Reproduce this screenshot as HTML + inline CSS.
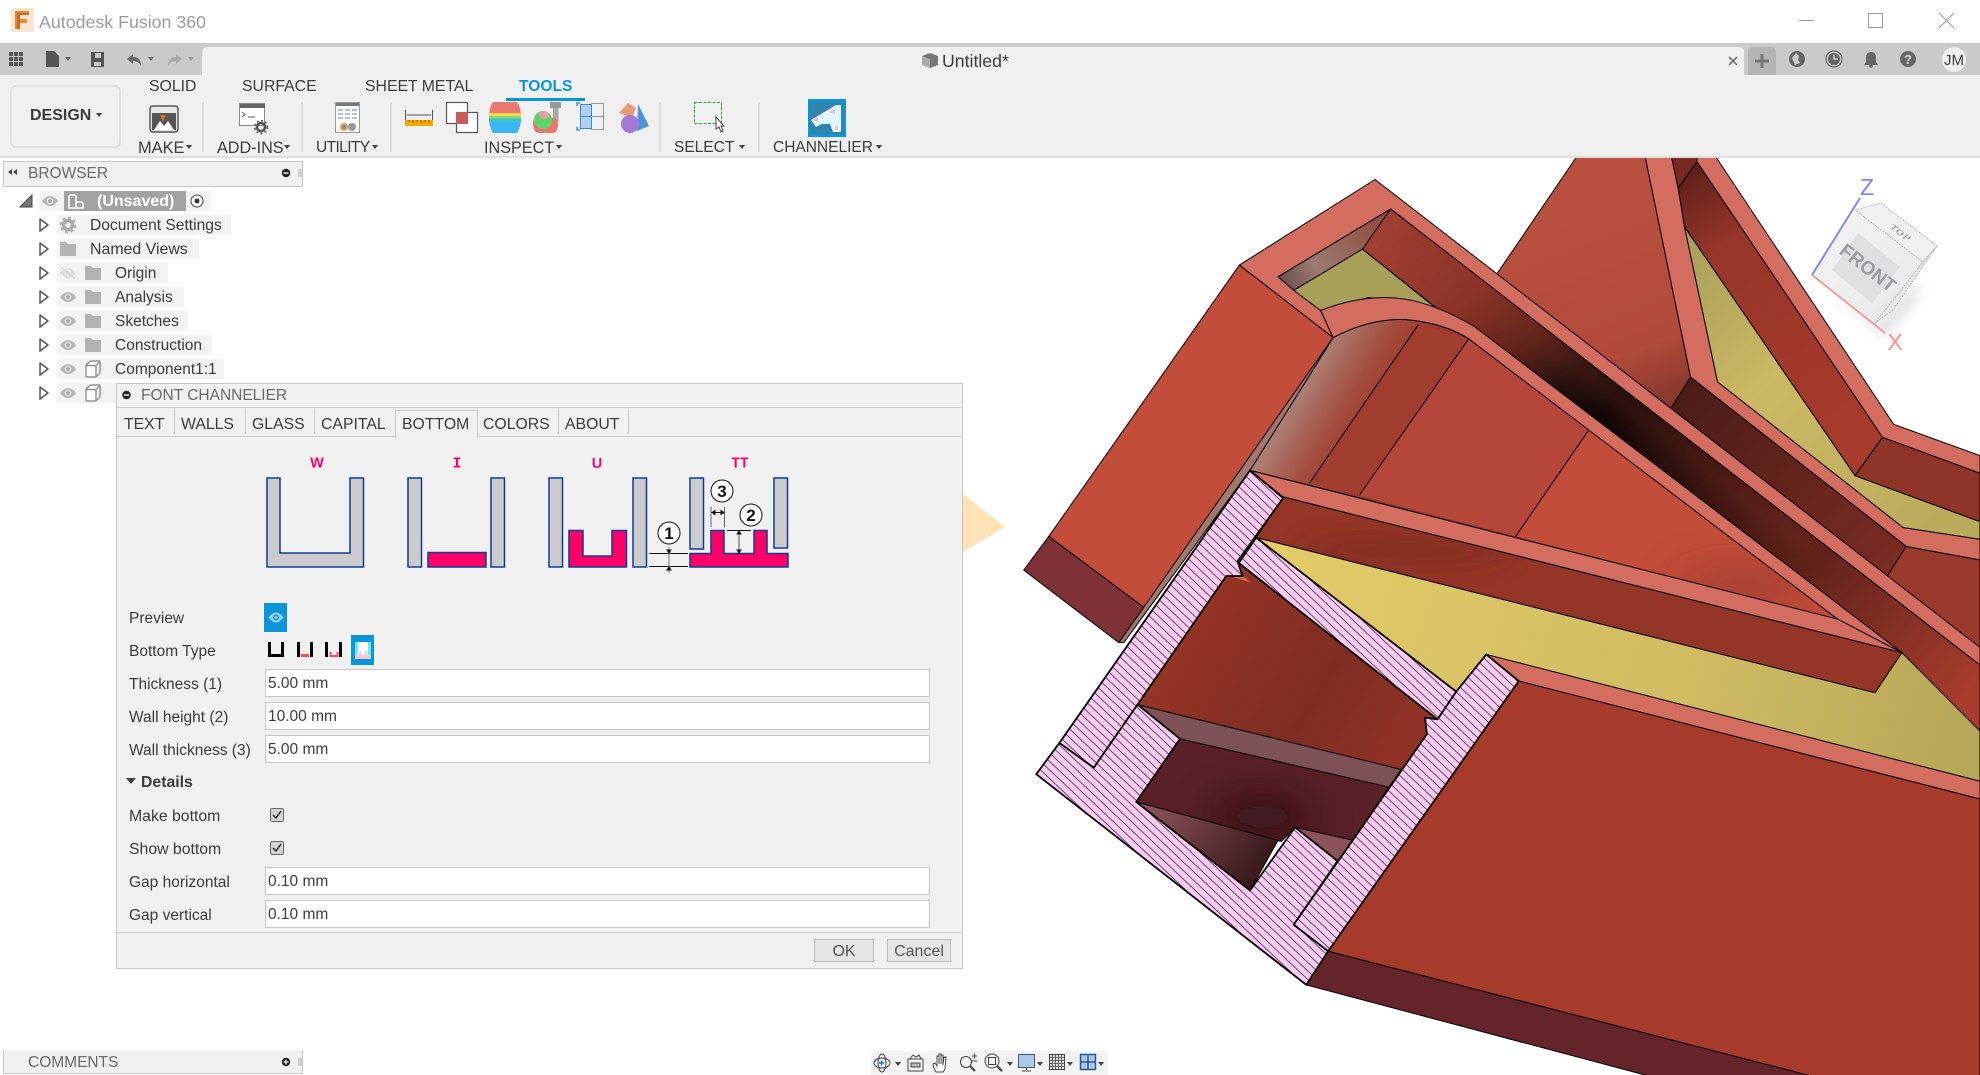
<!DOCTYPE html>
<html lang="en"><head><meta charset="utf-8"><title>Autodesk Fusion 360</title>
<style>
html,body{margin:0;padding:0;background:#fff;width:1980px;height:1075px;overflow:hidden}
body{position:relative;font-family:"Liberation Sans",Arial,sans-serif;font-size:15.5px;color:#3c3c3c}
.a{position:absolute}
.t{position:absolute;white-space:nowrap;line-height:20px;height:20px;margin-top:1px}
.bg{position:absolute;background:#f3f3f3;height:20px}
.inp{position:absolute;left:265px;width:663px;height:26px;background:#fff;border:1px solid #c8c8c8;line-height:27px;padding-left:0;text-indent:2px}
svg{position:absolute;left:0;top:0}
.sep{position:absolute;top:102px;width:2px;height:50px;background:#dedede}
.div{position:absolute;top:410px;width:1px;height:24px;background:#c8c8c8}
.tb{font-size:15.8px}
</style></head><body>

<!-- 3D viewport -->
<svg width="1980" height="1075" viewBox="0 0 1980 1075">
<defs>
<pattern id="h" patternUnits="userSpaceOnUse" width="14.5" height="14.5"><rect width="14.5" height="14.500" fill="#f9cbf4"/><path d="M-2,-2L16.500,16.500M-2,12.500L2,16.500M12.500,-2L16.500,2" stroke="#111" stroke-width="1"/></pattern>
<linearGradient id="gw" gradientUnits="userSpaceOnUse" x1="640" y1="120" x2="1568" y2="900"><stop offset="0" stop-color="#a04033"/><stop offset=".14" stop-color="#8c3428"/><stop offset=".24" stop-color="#5a2219"/><stop offset=".31" stop-color="#22100c"/><stop offset=".38" stop-color="#0c0504"/><stop offset=".5" stop-color="#2a0f0c"/><stop offset=".7" stop-color="#5a2018"/><stop offset="1" stop-color="#a63c2d"/></linearGradient>
<linearGradient id="gf" gradientUnits="userSpaceOnUse" x1="465" y1="430" x2="590" y2="500"><stop offset="0" stop-color="#ad8076"/><stop offset=".55" stop-color="#a24c3d"/><stop offset="1" stop-color="#9e3a2b"/></linearGradient>
<linearGradient id="gy" gradientUnits="userSpaceOnUse" x1="450" y1="680" x2="1568" y2="1000"><stop offset="0" stop-color="#e2cb68"/><stop offset=".6" stop-color="#d0bb63"/><stop offset="1" stop-color="#b5a658"/></linearGradient>
<linearGradient id="gy2" gradientUnits="userSpaceOnUse" x1="1100" y1="140" x2="1568" y2="650"><stop offset="0" stop-color="#a89d5a"/><stop offset=".4" stop-color="#cbb964"/><stop offset="1" stop-color="#b8aa5c"/></linearGradient>
<linearGradient id="gr" gradientUnits="userSpaceOnUse" x1="1090" y1="40" x2="1400" y2="500"><stop offset="0" stop-color="#5e2018"/><stop offset=".25" stop-color="#96352a"/><stop offset="1" stop-color="#a83c2c"/></linearGradient>
<linearGradient id="gi" gradientUnits="userSpaceOnUse" x1="300" y1="800" x2="650" y2="1000"><stop offset="0" stop-color="#953426"/><stop offset=".6" stop-color="#7e2c22"/><stop offset="1" stop-color="#8f3225"/></linearGradient>
<linearGradient id="gt" gradientUnits="userSpaceOnUse" x1="240" y1="1110" x2="420" y2="1220"><stop offset="0" stop-color="#8a5358"/><stop offset="1" stop-color="#38181a"/></linearGradient>
<linearGradient id="gtop" gradientUnits="userSpaceOnUse" x1="450" y1="220" x2="620" y2="120"><stop offset="0" stop-color="#6e534f"/><stop offset=".3" stop-color="#9c7a70"/><stop offset="1" stop-color="#8f4a3d"/></linearGradient>
<linearGradient id="gw2" gradientUnits="userSpaceOnUse" x1="1090" y1="400" x2="1440" y2="700"><stop offset="0" stop-color="#4a1c16"/><stop offset="1" stop-color="#7a2c22"/></linearGradient>
<linearGradient id="gb" gradientUnits="userSpaceOnUse" x1="1050" y1="420" x2="920" y2="100"><stop offset="0" stop-color="#8a3a2e"/><stop offset=".25" stop-color="#b04a3a"/><stop offset="1" stop-color="#b8503f"/></linearGradient>
<linearGradient id="gc" x1="0" y1="0" x2="1" y2="1"><stop offset="0" stop-color="#f4f4f4"/><stop offset="1" stop-color="#e8e8e8"/></linearGradient>
<filter id="b20" x="-300%" y="-300%" width="700%" height="700%"><feGaussianBlur stdDeviation="22"/></filter>
<filter id="b40" x="-300%" y="-300%" width="700%" height="700%"><feGaussianBlur stdDeviation="36"/></filter>
<filter id="b5" x="-50%" y="-50%" width="200%" height="200%"><feGaussianBlur stdDeviation="6"/></filter>
<clipPath id="cl3"><polygon points="945,470 1340,795 825,655"/></clipPath>
<clipPath id="cl4"><polygon points="288,998 622,1080 565,1170 472,1148 450,1172 218,1105"/></clipPath>
<clipPath id="cl5"><polygon points="453,588 1443,852 1400,920 410,657"/></clipPath>
<clipPath id="clw"><polygon points="625,100 1568,873 1568,990 1443,852 695,265 580,168"/></clipPath>
</defs>
<rect width="1980" height="1075" fill="#fff"/>
<polygon points="963,494 1005,527 963,552" fill="#fde3b6"/>
<g transform="translate(1000,150) scale(.625,.59)" stroke="#000" stroke-width="1" stroke-linejoin="round">
<g>
<polygon vector-effect="non-scaling-stroke" points="930,0 1030,0 1105,385 1072,440 795,210" fill="url(#gb)"/>
<polygon vector-effect="non-scaling-stroke" points="1115,0 1138,0 1430,465 1568,518 1568,548 1412,487 1115,20" fill="#d26d60"/>
<polygon vector-effect="non-scaling-stroke" points="1072,0 1115,0 1115,20 1085,65" fill="#762a21"/>
<polygon vector-effect="non-scaling-stroke" points="1085,65 1115,20 1412,487 1368,552 1095,130" fill="url(#gr)"/>
<polygon vector-effect="non-scaling-stroke" points="1095,130 1368,552 1568,630 1568,660 1445,640 1148,393" fill="url(#gy2)"/>
<polygon vector-effect="non-scaling-stroke" points="1412,487 1568,548 1568,630 1368,552" fill="#8f3428"/>
<polygon vector-effect="non-scaling-stroke" points="1030,0 1072,0 1085,65 1095,130 1148,393 1445,640 1568,660 1568,695 1450,672 1105,385" fill="#d26d60"/>
<polygon vector-effect="non-scaling-stroke" points="1105,385 1450,672 1418,725 1072,440" fill="url(#gw2)"/>
<polygon vector-effect="non-scaling-stroke" points="1450,672 1568,695 1568,860 1418,725" fill="#9a3a2c"/>

<polygon vector-effect="non-scaling-stroke" points="600,50 1568,843 1568,873 625,100 445,215 513,272 533,318 383,195" fill="#d26d60"/>
<polygon vector-effect="non-scaling-stroke" points="445,215 625,100 580,168 470,238" fill="url(#gtop)"/>
<polygon vector-effect="non-scaling-stroke" points="470,238 580,168 700,270 590,250 513,272" fill="#a89f58"/>
<polygon vector-effect="non-scaling-stroke" points="625,100 1568,873 1568,990 1443,852 695,265 580,168" fill="url(#gw)"/>
<g clip-path="url(#clw)"><polygon stroke="none" points="625,100 1300,655 1300,690 625,135" fill="#8a3428" opacity=".5" filter="url(#b20)"/></g>

<path vector-effect="non-scaling-stroke" d="M533,318Q610,275 680,292Q720,300 750,320L1340,795L400,543Z" fill="url(#gf)"/>
<polygon stroke="none" points="670,295 750,320 575,585 495,565" fill="#a03d2e"/>
<polygon stroke="none" points="750,320 945,470 825,655 575,585" fill="#b5473a"/>
<polygon stroke="none" points="945,470 1340,795 825,655" fill="#c24d3a"/>
<g clip-path="url(#cl3)"><ellipse cx="1190" cy="740" rx="110" ry="24" fill="#7a2c22" stroke="none" opacity=".6" filter="url(#b40)"/></g>
<path vector-effect="non-scaling-stroke" fill="none" d="M670,295L495,565M750,320L575,585M945,470L825,655"/>
<path vector-effect="non-scaling-stroke" d="M513,272Q590,240 660,255Q710,268 760,300L1443,852L1340,795L750,320Q720,300 680,292Q610,275 533,318Z" fill="#d26d60"/>
<polygon vector-effect="non-scaling-stroke" points="400,543 1340,795 1443,852 453,588" fill="#d26d60"/>
<polygon vector-effect="non-scaling-stroke" points="453,588 1443,852 1400,920 410,657" fill="#933527"/>
<g clip-path="url(#cl5)"><ellipse cx="650" cy="680" rx="170" ry="16" fill="#74291f" stroke="none" opacity=".7" filter="url(#b20)"/></g>
<polygon vector-effect="non-scaling-stroke" points="410,657 1400,920 1443,852 1568,985 1568,1070 778,855 730,918" fill="url(#gy)"/>
<polygon vector-effect="non-scaling-stroke" points="778,855 1568,1070 1568,1100 830,900" fill="#d26d60"/>
<polygon vector-effect="non-scaling-stroke" points="830,900 1568,1100 1568,1600 1400,1600 525,1358" fill="#a63b2c"/>
<polygon vector-effect="non-scaling-stroke" points="525,1358 1300,1570 1040,1570 490,1415" fill="#65232a"/>

<polygon vector-effect="non-scaling-stroke" points="383,195 533,318 395,540 230,775 78,655" fill="#c24d3a"/>
<polygon vector-effect="non-scaling-stroke" points="230,775 533,318 400,543 198,835 190,835" fill="#a2786e"/>
<polygon vector-effect="non-scaling-stroke" points="78,655 230,775 190,835 38,712" fill="#7e3237"/>

<polygon stroke="none" points="362,722 382,700 700,965 680,962 683,990 642,1050 220,940" fill="url(#gi)"/>
<polygon stroke="none" points="366,722 388,722 402,733" fill="#c96a5c"/>
<polygon vector-effect="non-scaling-stroke" points="220,940 642,1050 622,1080 288,998" fill="#7c5256"/>
<polygon vector-effect="non-scaling-stroke" points="288,998 622,1080 565,1170 472,1148 450,1172 218,1105" fill="#5a2028"/>
<g clip-path="url(#cl4)"><ellipse cx="420" cy="1130" rx="80" ry="28" fill="#1e0a0a" stroke="none" opacity=".85" filter="url(#b40)"/></g>
<polygon vector-effect="non-scaling-stroke" points="218,1105 445,1170 400,1255" fill="url(#gt)"/>
<polygon vector-effect="non-scaling-stroke" points="472,1148 565,1170 540,1205" fill="#8a5358"/>
</g>
<g fill="url(#h)" stroke="#000" stroke-width="1.8">
<polygon vector-effect="non-scaling-stroke" points="400,543 453,590 380,697 388,722 362,722 220,940 150,1047 95,1005"/>
<polygon vector-effect="non-scaling-stroke" points="410,657 730,918 700,965 382,700"/>
<polygon vector-effect="non-scaling-stroke" points="58,1058 95,1005 150,1047 220,940 288,998 218,1105 400,1255 472,1148 540,1205 470,1313 525,1358 490,1415"/>
<polygon vector-effect="non-scaling-stroke" points="778,855 830,900 525,1358 470,1313 683,990 680,962 700,965 730,918"/>
</g>
</g>
<!-- view cube -->
<polygon points="1820,285 1885,335 1915,300 1920,280 1880,325" fill="#aaa" opacity=".45" filter="url(#b5)"/>
<polygon points="1855,210 1923,262 1875,323 1813,275" fill="url(#gc)"/>
<polygon points="1855,210 1881,203 1937,246 1923,262" fill="#f0f0f0" stroke="#aaa" stroke-width=".8" stroke-dasharray="2 1"/>
<polygon points="1923,262 1937,246 1893,310 1875,323" fill="#e8e8e8" stroke="#aaa" stroke-width=".8" stroke-dasharray="2 1"/>
<polygon points="1858,233 1900,267 1872,303 1832,270" fill="#e0e0e0"/>
<line x1="1812" y1="275" x2="1860" y2="198" stroke="#8585f5" stroke-width="2"/>
<line x1="1812" y1="275" x2="1885" y2="333" stroke="#ef9c9c" stroke-width="2"/>
<text x="1867" y="195" font-family="Liberation Sans" font-size="23" fill="#8282f8" text-anchor="middle">Z</text>
<text x="1895" y="350" font-family="Liberation Sans" font-size="23" fill="#fb8f8f" text-anchor="middle">X</text>
<text transform="translate(1864,273) rotate(38)" font-family="Liberation Sans" font-weight="bold" font-size="19" fill="#9a9ca0" text-anchor="middle">FRONT</text>
<text transform="translate(1899,235) rotate(38) scale(1,.75)" font-family="Liberation Serif" font-style="italic" font-size="11" fill="#888" text-anchor="middle" letter-spacing="1">TOP</text>
</svg>

<!-- Title + chrome -->
<div class="a" style="left:0;top:0;width:1980px;height:43px;background:#fff"></div>
<div class="t" style="left:39px;top:11px;font-size:17.8px;color:#9b9b9b">Autodesk Fusion 360</div>
<div class="a" style="left:0;top:43px;width:1980px;height:32px;background:#cacaca"></div>
<div class="a" style="left:202px;top:47px;width:1542px;height:28px;background:#f1f1f1;border-radius:5px 5px 0 0"></div>
<div class="a" style="left:0;top:75px;width:1980px;height:81px;background:#f0f0f0;border-bottom:2px solid #dfdfdf"></div>
<div class="a" style="left:1748px;top:47px;width:28px;height:28px;background:#b5b5b5;border-radius:4px 4px 0 0"></div>
<div class="t" style="left:942px;top:50px;font-size:17.7px">Untitled*</div>
<div class="a" style="left:1942px;top:47px;width:24px;height:25px;border-radius:50%;background:#f0f0f0;text-align:center;line-height:27px;font-size:15px">JM</div>

<!-- Toolbar -->
<div class="a" style="left:10px;top:85px;width:107px;height:59px;border:2px solid #e0e0e0;border-radius:6px"></div>
<div class="t" style="left:30px;top:105px;font-weight:bold;font-size:16px">DESIGN</div>
<div class="t tb" style="left:149px;top:76px">SOLID</div>
<div class="t tb" style="left:242px;top:76px">SURFACE</div>
<div class="t tb" style="left:365px;top:76px">SHEET METAL</div>
<div class="t" style="left:519px;top:76px;color:#0696d7;font-weight:bold;font-size:15.6px">TOOLS</div>
<div class="a" style="left:506px;top:98px;width:79px;height:3px;background:#0696d7"></div>
<div class="sep" style="left:202px"></div><div class="sep" style="left:301px"></div><div class="sep" style="left:390px"></div><div class="sep" style="left:659px"></div><div class="sep" style="left:758px"></div>
<div class="t" style="left:138px;top:137px;font-size:16.4px">MAKE</div>
<div class="t" style="left:217px;top:137px;font-size:16.2px">ADD-INS</div>
<div class="t" style="left:316px;top:137px;letter-spacing:-.6px">UTILITY</div>
<div class="t" style="left:484px;top:137px;font-size:16.2px">INSPECT</div>
<div class="t" style="left:674px;top:137px">SELECT</div>
<div class="t" style="left:773px;top:137px">CHANNELIER</div>

<!-- Browser -->
<div class="a" style="left:3px;top:161px;width:298px;height:24px;background:#f1f1f1;border:1px solid #c8c8c8"></div>
<div class="t" style="left:28px;top:163px;color:#6a6a6a">BROWSER</div>
<div class="bg" style="left:39px;top:191px;width:172px"></div>
<div class="a" style="left:64px;top:191px;width:122px;height:20px;background:#a2a2a2"></div>
<div class="t" style="left:97px;top:191px;color:#fff;font-weight:bold;font-size:16px">(Unsaved)</div>
<div class="bg" style="left:57px;top:215px;width:174px"></div><div class="t" style="left:90px;top:215px;font-size:15.6px">Document Settings</div>
<div class="bg" style="left:57px;top:239px;width:142px"></div><div class="t" style="left:90px;top:239px;font-size:15.9px">Named Views</div>
<div class="bg" style="left:57px;top:263px;width:111px"></div><div class="t" style="left:115px;top:263px">Origin</div>
<div class="bg" style="left:57px;top:287px;width:127px"></div><div class="t" style="left:115px;top:287px">Analysis</div>
<div class="bg" style="left:57px;top:311px;width:131px"></div><div class="t" style="left:115px;top:311px">Sketches</div>
<div class="bg" style="left:57px;top:335px;width:155px"></div><div class="t" style="left:115px;top:335px">Construction</div>
<div class="bg" style="left:57px;top:359px;width:167px"></div><div class="t" style="left:115px;top:359px">Component1:1</div>
<div class="bg" style="left:57px;top:383px;width:60px"></div>

<!-- Dialog -->
<div class="a" style="left:116px;top:383px;width:845px;height:584px;background:#f1f1f1;border:1px solid #c6c6c6"></div>
<div class="a" style="left:117px;top:407px;width:844px;height:1px;background:#cbcbcb"></div>
<div class="t" style="left:141px;top:385px;color:#6a6a6a">FONT CHANNELIER</div>
<div class="a" style="left:117px;top:436px;width:844px;height:1px;background:#c8c8c8"></div>
<div class="div" style="left:174px"></div><div class="div" style="left:245px"></div><div class="div" style="left:314px"></div><div class="div" style="left:558px"></div><div class="div" style="left:628px"></div>
<div class="a" style="left:395px;top:410px;width:81px;height:27px;border:1px solid #c8c8c8;border-bottom:none;background:#f1f1f1"></div>
<div class="t tb" style="left:124px;top:414px">TEXT</div>
<div class="t tb" style="left:181px;top:414px">WALLS</div>
<div class="t tb" style="left:252px;top:414px">GLASS</div>
<div class="t tb" style="left:321px;top:414px">CAPITAL</div>
<div class="t tb" style="left:402px;top:414px">BOTTOM</div>
<div class="t tb" style="left:483px;top:414px">COLORS</div>
<div class="t tb" style="left:565px;top:414px">ABOUT</div>

<div class="t" style="left:129px;top:608px">Preview</div>
<div class="t" style="left:129px;top:641px">Bottom Type</div>
<div class="t" style="left:129px;top:674px">Thickness (1)</div>
<div class="t" style="left:129px;top:707px">Wall height (2)</div>
<div class="t" style="left:129px;top:740px">Wall thickness (3)</div>
<div class="t" style="left:141px;top:772px;font-weight:bold;font-size:15.8px">Details</div>
<div class="t" style="left:129px;top:806px;font-size:15.8px">Make bottom</div>
<div class="t" style="left:129px;top:839px;font-size:15.8px">Show bottom</div>
<div class="t" style="left:129px;top:872px">Gap horizontal</div>
<div class="t" style="left:129px;top:905px">Gap vertical</div>
<div class="inp" style="top:669px">5.00 mm</div>
<div class="inp" style="top:702px">10.00 mm</div>
<div class="inp" style="top:735px">5.00 mm</div>
<div class="inp" style="top:867px">0.10 mm</div>
<div class="inp" style="top:900px">0.10 mm</div>
<div class="a" style="left:117px;top:932px;width:844px;height:1px;background:#cbcbcb"></div>
<div class="a" style="left:814px;top:939px;width:58px;height:21px;background:#e6e6e6;border:1px solid #bcbcbc;text-align:center;line-height:23px;font-size:16px;color:#555">OK</div>
<div class="a" style="left:887px;top:939px;width:62px;height:21px;background:#e6e6e6;border:1px solid #bcbcbc;text-align:center;line-height:23px;font-size:16px;color:#555">Cancel</div>

<!-- Comments -->
<div class="a" style="left:3px;top:1050px;width:298px;height:23px;background:#f1f1f1;border:1px solid #c8c8c8;border-top:none"></div>
<div class="t" style="left:28px;top:1052px;color:#6a6a6a">COMMENTS</div>
<!-- Nav bar bg -->
<div class="a" style="left:871px;top:1051px;width:237px;height:24px;background:#f3f3f3"></div>

<!-- Icons and diagrams overlay -->
<svg width="1980" height="1075" viewBox="0 0 1980 1075" style="pointer-events:none">
<defs>
<g id="eye"><path d="M-8,0Q0,-10 8,0Q0,10 -8,0Z" fill="#b4b4b4"/><circle r="3.300" fill="#ececec"/><circle r="2" fill="#a8a8a8"/></g>
<path id="fol" d="M0,-7h6l2,2h8v12h-16z" fill="#b4b4b4"/>
<polygon id="tri" points="-4,-6 4,0 -4,6" fill="#fff" stroke="#555" stroke-width="1.5" stroke-linejoin="round"/>
<g id="box" fill="#fbfbfb" stroke="#808080" stroke-width="1.200" stroke-linejoin="round"><path d="M-7,-3Q-7,-4 -6,-5L-3,-7.500Q-2,-8 -1,-8H6Q7,-8 7,-7V3Q7,4 6,5L4,7Q3,8 2,8H-6Q-7,8 -7,7Z"/><path d="M-7,-3.500H2Q3,-3.500 3,-2.500V8M3,-3.500L7,-7.500" fill="none"/></g>
<path id="car" d="M0,0h6l-3,4z" fill="#444"/>
</defs>
<!-- logo -->
<rect x="11" y="8" width="23" height="24" fill="#fbe6d3"/>
<path d="M15,11H29V15H20V19H27V23H20V29H15Z" fill="#e88a2f"/><path d="M17,13H29V15H20V29H17Z" fill="#c96a1e"/>
<!-- window -->
<line x1="1799" y1="20.5" x2="1814" y2="20.5" stroke="#999" stroke-width="1"/>
<rect x="1868.5" y="13.5" width="14" height="14" fill="none" stroke="#999"/>
<path d="M1939,13L1954,28M1954,13L1939,28" stroke="#999" fill="none"/>
<!-- left quick bar -->
<g fill="#555"><path d="M9,52h4v4h-4zM14,52h4v4h-4zM19,52h4v4h-4zM9,57h4v4h-4zM14,57h4v4h-4zM19,57h4v4h-4zM9,62h4v4h-4zM14,62h4v4h-4zM19,62h4v4h-4z"/>
<path d="M46,51h8l5,5v11h-13z"/><use href="#car" x="65" y="57" opacity=".8"/>
<path d="M91,52h13v15h-13zM95,53v5h6v-5zM94,62v4h7v-4z" fill-rule="evenodd"/>
<path d="M127,59l6,-5v3q8,0 8,9q-2,-5 -8,-5v3z" fill="#666"/><use href="#car" x="148" y="57" opacity=".7"/>
<path d="M182,59l-6,-5v3q-8,0 -8,9q2,-5 8,-5v3z" fill="#aaa"/><use href="#car" x="188" y="57" opacity=".35"/></g>
<!-- doc cube -->
<path d="M922,56L930,53L938,56V65L930,68L922,65Z" fill="#777"/><path d="M922,56L930,59V68L922,65Z" fill="#aaa"/>
<!-- right bar -->
<path d="M1729,57l8,8M1737,57l-8,8" stroke="#777" stroke-width="1.6"/>
<path d="M1762,54v14M1755,61h14" stroke="#777" stroke-width="3"/>
<circle cx="1797" cy="59" r="8" fill="#666"/><path d="M1792,58l4,-5 3,3 -1,4 2,3 -5,2z" fill="#cacaca"/>
<circle cx="1834" cy="59" r="8" fill="#cacaca" stroke="#666" stroke-width="1.2"/><circle cx="1834" cy="59" r="6" fill="#666"/><path d="M1834,55v4h4" stroke="#ddd" fill="none" stroke-width="1.3"/>
<path d="M1871,52q5,0 5,6v4l2,3h-14l2,-3v-4q0,-6 5,-6z" fill="#666"/><circle cx="1871" cy="66" r="1.8" fill="#666"/>
<circle cx="1908" cy="59" r="8" fill="#666"/><text x="1908" y="64" font-family="Liberation Sans" font-weight="bold" font-size="13" fill="#ddd" text-anchor="middle">?</text>

<!-- toolbar carets -->
<use href="#car" x="96" y="113"/><use href="#car" x="186" y="145"/><use href="#car" x="284" y="145"/><use href="#car" x="372" y="145"/><use href="#car" x="556" y="145"/><use href="#car" x="739" y="145"/><use href="#car" x="876" y="145"/>
<!-- make -->
<rect x="150" y="106" width="28" height="26" rx="3" fill="#e8e8e8" stroke="#555" stroke-width="1.500"/><rect x="152" y="113" width="24" height="17" fill="#555"/><path d="M154,130l6,-9 4,5 4,-5 6,9z" fill="#fff"/><path d="M160,115h6l-3,7z" fill="#e0701e"/>
<!-- add-ins -->
<rect x="239.5" y="103.500" width="25" height="22" fill="#fff" stroke="#888"/><rect x="240" y="104" width="25" height="4" fill="#666"/><path d="M242,112l3,2.500 -3,2.500M248,117h7" fill="none" stroke="#555"/>
<circle cx="261" cy="127" r="4" fill="none" stroke="#555" stroke-width="2.5"/><circle cx="261" cy="127" r="6.300" fill="none" stroke="#555" stroke-width="1.500" stroke-dasharray="2 2.200"/>
<!-- utility -->
<rect x="335.500" y="102.500" width="24" height="30" fill="#fff" stroke="#999"/><rect x="336" y="103" width="23" height="3" fill="#777"/>
<path d="M338,109h5v2h-5zM345,109h5v2h-5zM352,109h5v2h-5zM338,113h5v2h-5zM345,113h5v2h-5zM352,113h5v2h-5zM338,117h5v2h-5zM345,117h5v2h-5zM352,117h5v2h-5z" fill="#b4bfcc"/>
<circle cx="344" cy="127" r="4" fill="#e8a33c"/><circle cx="344" cy="127" r="2" fill="#6a90c8"/><circle cx="352" cy="127" r="4" fill="#999"/>
<!-- inspect -->
<path d="M405.500,110v10M432.500,110v10M407,115h24" stroke="#555" fill="none"/><rect x="405" y="120" width="28" height="6" fill="#f5a800"/><path d="M409,120v2M413,120v3M417,120v2M421,120v3M425,120v2M429,120v3" stroke="#8a6000"/>
<rect x="446.500" y="102.500" width="21" height="21" fill="#fff" stroke="#555" stroke-width="1.200"/><rect x="456.500" y="112.500" width="21" height="20" fill="#fff" stroke="#555" stroke-width="1.200"/><rect x="456" y="112" width="12" height="12" fill="#c85c5c"/>
<path d="M493,102h24q4,5 4,15q0,10 -4,16h-24q-4,-6 -4,-16q0,-10 4,-15z" fill="#e97970"/><path d="M489,113h32v4h-32z" fill="#f6d84a"/><path d="M489,116h32v2.500h-32z" fill="#8fd46c"/><path d="M489,118.500h32v4h-32z" fill="#34c4d0"/><path d="M489.500,122h31q-.5,6 -3.500,11h-24q-3,-5 -3.500,-11z" fill="#3ab6f5"/>
<rect x="550" y="102" width="11" height="6" fill="#999"/><rect x="553" y="108" width="5.500" height="14" fill="#aaa"/>
<path d="M533,122q0,-3 4,-4h17q4,1 4,6q0,9 -5,9h-14q-6,0 -6,-11z" fill="#e97970"/><ellipse cx="543" cy="120" rx="9" ry="9" fill="#5fd46c"/><ellipse cx="544" cy="115" rx="5" ry="4" fill="#e6a0a0"/>
<path d="M580,103h-3v3M577,127v3h3" stroke="#1e88e5" fill="none" stroke-width="1.300"/><rect x="591.500" y="103.500" width="12" height="13" fill="none" stroke="#999"/><rect x="591.500" y="116.500" width="12" height="13" fill="none" stroke="#999"/><rect x="580.500" y="104.500" width="11" height="12" fill="#b4d0ec" stroke="#2c8ee0"/><rect x="580.500" y="116.500" width="11" height="12" fill="#b4d0ec" stroke="#2c8ee0"/>
<path d="M619,113l9,-10 8,5 -4,10z" fill="#e89c74"/><path d="M638,104l11,22 -12,5z" fill="#4c96d8"/><circle cx="630" cy="124" r="9" fill="#a878d8"/>
<!-- select -->
<rect x="694.500" y="102.500" width="27" height="21" fill="none" stroke="#2da44e" stroke-dasharray="3 1.500"/>
<path d="M716,117l8,9h-3l2,5 -2,1 -2,-5 -3,2z" fill="#fff" stroke="#444"/>
<!-- channelier -->
<rect x="808" y="99" width="38" height="38" fill="#0a96d8"/><rect x="810" y="102" width="34" height="32" fill="#2f84ad"/>
<path d="M811,120L836,105H841L841,132L833,132L830,124L822,124L816,127Z" fill="#dff8ff"/><path d="M828,112l7,-3v5zM813,118l5,-1v4h-4zM835,126h3v4h-3z" fill="#f5b6e4"/>

<!-- browser icons -->
<path d="M16,169v6l-4,-3zM11,169v6l-4,-3z" fill="#444" transform="translate(1,0)"/>
<circle cx="286" cy="173" r="4.200" fill="#222"/><rect x="283.500" y="172.300" width="5" height="1.500" fill="#eee"/><path d="M299,169v8M301,169v8" stroke="#aaa" fill="none"/>
<circle cx="286" cy="1062" r="4.200" fill="#222"/><path d="M283.500,1062h5M286,1059.500v5" stroke="#eee" stroke-width="1.300"/><path d="M299,1058v8M301,1058v8" stroke="#aaa" fill="none"/>
<!-- tree -->
<polygon points="20,207 32,195 32,207" fill="#777" stroke="#444"/>
<use href="#eye" x="50" y="201"/>
<path d="M69,208v-11q0,-2 2,-2h3q2,0 2,2v11zM76,202h5q2,0 2,2v4h-7z" fill="none" stroke="#fff" stroke-width="1.500"/>
<circle cx="197" cy="201" r="6" fill="#fff" stroke="#444" stroke-width="1"/><circle cx="197" cy="201" r="2.400" fill="#333"/>
<use href="#tri" x="44" y="225"/><use href="#tri" x="44" y="249"/><use href="#tri" x="44" y="273"/><use href="#tri" x="44" y="297"/><use href="#tri" x="44" y="321"/><use href="#tri" x="44" y="345"/><use href="#tri" x="44" y="369"/><use href="#tri" x="44" y="393"/>
<circle cx="68" cy="225" r="4.500" fill="none" stroke="#aaa" stroke-width="3.500"/><circle cx="68" cy="225" r="7.300" fill="none" stroke="#aaa" stroke-width="2" stroke-dasharray="3 2.700"/>
<use href="#fol" x="60" y="249"/>
<g opacity=".35"><use href="#eye" x="68" y="273"/><path d="M61,267l14,12" stroke="#aaa" stroke-width="1.500"/></g>
<use href="#fol" x="85" y="273"/>
<use href="#eye" x="68" y="297"/><use href="#fol" x="85" y="297"/>
<use href="#eye" x="68" y="321"/><use href="#fol" x="85" y="321"/>
<use href="#eye" x="68" y="345"/><use href="#fol" x="85" y="345"/>
<use href="#eye" x="68" y="369"/><use href="#box" x="93" y="369"/>
<use href="#eye" x="68" y="393"/><use href="#box" x="93" y="393"/>
<!-- dialog -->
<circle cx="126.500" cy="395" r="4.200" fill="#222"/><rect x="124" y="394.300" width="5" height="1.500" fill="#eee"/>
<text x="317" y="467.500" font-family="Liberation Sans" font-weight="bold" font-size="14.500" fill="#ff0066" text-anchor="middle">W</text>
<text x="457" y="467.500" font-family="Liberation Mono" font-weight="bold" font-size="15" fill="#ff0066" text-anchor="middle">I</text>
<text x="597" y="468" font-family="Liberation Sans" font-weight="bold" font-size="14.500" fill="#ff0066" text-anchor="middle">U</text>
<text x="740" y="467.500" font-family="Liberation Mono" font-weight="bold" font-size="14.500" fill="#ff0066" text-anchor="middle">TT</text>
<g stroke="#0b3d9c" stroke-width="1.500" fill="#ccc">
<path d="M267,478h13v75h70v-75h13.500v89h-96.500z"/>
<rect x="408" y="478" width="13.500" height="89"/><rect x="491" y="478" width="13.500" height="89"/>
<rect x="549" y="478" width="13.500" height="89"/><rect x="633" y="478" width="13.500" height="89"/>
<rect x="690" y="478" width="13.500" height="71"/><rect x="774" y="478" width="13.500" height="70"/>
<g fill="#ff0066"><rect x="428" y="552.500" width="58" height="14.500"/>
<path d="M569,530.500h14v25.500h29v-25.500h14.500v36.500h-57.500z"/>
<path d="M690,553.500h21v-23h13v23h30v-23h13v23h21v13.500h-98z"/></g></g>
<g stroke="#111" stroke-width="1" fill="none">
<path d="M649,553.500h39M649,566.500h39"/><path d="M669,547v26" stroke="#777"/><path d="M669,553l-2,-3h4zM669,567l-2,3h4z" fill="#111"/>
<path d="M711,507v20M724.500,507v20" stroke="#666"/><path d="M713,512.500h10"/><path d="M712,512.500l3,-2v4zM724,512.500l-3,-2v4z" fill="#111"/><path d="M727,530.500h24"/><path d="M739,531v22" stroke="#555"/><path d="M739,531l-2,3h4zM739,553l-2,-3h4z" fill="#111"/>
</g>
<g font-family="Liberation Sans" font-weight="bold" font-size="17" text-anchor="middle" fill="#111">
<circle cx="669" cy="533" r="11" fill="#fff" stroke="#111"/><text x="669" y="539">1</text>
<circle cx="722" cy="491" r="11" fill="#fff" stroke="#111"/><text x="722" y="497">3</text>
<circle cx="751" cy="515" r="11" fill="#fff" stroke="#111"/><text x="751" y="521">2</text></g>
<!-- preview button -->
<rect x="264" y="603" width="23" height="29" fill="#0a96d8"/><path d="M268.500,617.500Q276,607.500 283.500,617.500Q276,627.500 268.500,617.500Z" fill="#9fd0ea"/><circle cx="276" cy="617.500" r="3" fill="#0a96d8"/><circle cx="276" cy="617.500" r="1.500" fill="#9fd0ea"/>
<!-- bottom type -->
<path d="M269.500,642v13.500h13v-13.500" fill="none" stroke="#000" stroke-width="3"/>
<path d="M298.500,642v15M311.500,642v15M326.500,642v15M340.500,642v15" fill="none" stroke="#000" stroke-width="3"/>
<rect x="301" y="654" width="8" height="3" fill="#f54d5a"/><path d="M330.500,652v4h7v-4" fill="none" stroke="#f54d5a" stroke-width="2"/>
<rect x="351" y="635" width="23" height="30" fill="#0a96d8"/><rect x="355" y="642" width="16" height="17" fill="#fff"/><rect x="355" y="642" width="3" height="14" fill="#66eef8"/><rect x="368" y="642" width="3" height="14" fill="#66eef8"/><rect x="355" y="655" width="16" height="4" fill="#fbc8d4"/><path d="M360,655v-4M366,655v-4" stroke="#fbc8d4" stroke-width="2"/>
<path d="M126,778h10l-5,6z" fill="#444"/>
<!-- checkboxes -->
<g><rect x="270.500" y="808.500" width="13" height="13" rx="2" fill="#d4d4d4" stroke="#666"/><path d="M273,815l3,3 5,-7" fill="none" stroke="#111" stroke-width="1.300"/>
<rect x="270.500" y="841.500" width="13" height="13" rx="2" fill="#d4d4d4" stroke="#666"/><path d="M273,848l3,3 5,-7" fill="none" stroke="#111" stroke-width="1.300"/></g>
<!-- nav bar -->
<g fill="none" stroke="#444" stroke-width="1">
<ellipse cx="882" cy="1063" rx="8" ry="5"/><ellipse cx="882" cy="1063" rx="4" ry="9"/><path d="M879,1063h5M881.500,1060.500v5" stroke="#1e78d2" stroke-width="1.500"/>
<rect x="908" y="1059" width="15" height="12"/><rect x="911" y="1063" width="9" height="4" fill="#bbb"/><path d="M910,1059l3,-4 3,2 3,-2 2,4"/>
<path d="M936,1072q-3,-5 -3,-8l2,-1 2,3v-10h2v8v-10h2v10v-9h2v10l1,-8h2l-1,12-2,3z" fill="#fff"/>
<circle cx="966" cy="1062" r="5.500"/><path d="M970,1066l5,5" stroke="#555" stroke-width="2.500"/><path d="M972,1056h5M974.500,1053.500v5M972,1061h5"/>
<circle cx="992" cy="1061" r="7"/><rect x="988.500" y="1057.500" width="7" height="7"/><path d="M997,1066l5,5" stroke="#555" stroke-width="2.500"/>
<rect x="1018.500" y="1054.500" width="16" height="13" fill="#a8c8ec" stroke="#556"/><path d="M1026.500,1068v2M1022,1071h9"/>
<rect x="1049.500" y="1054.500" width="15" height="15" fill="#ddd"/><path d="M1052.500,1055v14M1055.500,1055v14M1058.500,1055v14M1061.500,1055v14M1050,1057.500h14M1050,1060.500h14M1050,1063.500h14M1050,1066.500h14" stroke="#666"/>
<rect x="1080.500" y="1054.500" width="15" height="15" fill="#a8c8ec" stroke="#2a5a92" stroke-width="1.500"/><path d="M1088,1055v14M1081,1062h14" stroke="#2a5a92" stroke-width="1.500"/>
</g>
<use href="#car" x="895" y="1062"/><use href="#car" x="1007" y="1062"/><use href="#car" x="1037" y="1062"/><use href="#car" x="1067" y="1062"/><use href="#car" x="1098" y="1062"/>
</svg>
</body></html>
